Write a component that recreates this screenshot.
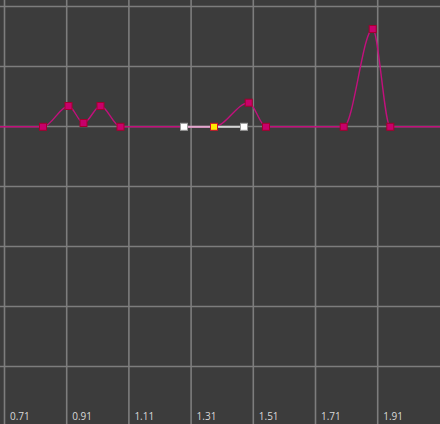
const COLS = [4.5, 66.7, 128.9, 191.1, 253.3, 315.5, 377.7]
const ROWS = [6.5, 66.5, 126.5, 186.5, 246.5, 306.5, 366.5]
const LABELS = ['0.71', '0.91', '1.11', '1.31', '1.51', '1.71', '1.91']

const BASE = 126.8

// keyframes along the curve, in screen coordinates
const keys: [number, number][] = [
  [43, BASE],
  [68.5, 106],
  [83.5, 123],
  [100.5, 106],
  [120.5, BASE],
  [214, BASE],
  [248.7, 102.7],
  [266, BASE],
  [343.7, BASE],
  [372.7, 29],
  [390.3, BASE],
]

function curvePath() {
  let d = `M0 ${BASE} L${keys[0][0]} ${keys[0][1]}`
  for (let i = 1; i < keys.length; i++) {
    const [x0, y0] = keys[i - 1]
    const [x1, y1] = keys[i]
    const dx = (x1 - x0) / 3
    d += ` C${x0 + dx} ${y0} ${x1 - dx} ${y1} ${x1} ${y1}`
  }
  d += ` L440 ${BASE}`
  return d
}

function Key({ x, y, fill = '#c8006b', stroke = '#a3002e' }: { x: number; y: number; fill?: string; stroke?: string }) {
  return <rect x={x - 3.5} y={y - 3.5} width={7} height={7} fill={fill} stroke={stroke} strokeWidth={1} />
}

export default function App() {
  return (
    <div className="relative h-[424px] w-[440px] overflow-hidden bg-[#3c3c3c]">
      <svg width="440" height="424" className="block">
        {COLS.map((x) => (
          <line key={`c${x}`} x1={x} y1={0} x2={x} y2={424} stroke="#7d7d7d" strokeWidth={1.6} />
        ))}
        {ROWS.map((y) => (
          <line key={`r${y}`} x1={0} y1={y} x2={440} y2={y} stroke="#7d7d7d" strokeWidth={1.6} />
        ))}

        <path d={curvePath()} fill="none" stroke="#c2107c" strokeWidth={1.4} />

        {/* tangent handles of the selected key */}
        <line x1={184} y1={BASE} x2={214} y2={BASE} stroke="#e2a9cd" strokeWidth={2} />
        <line x1={214} y1={BASE} x2={244} y2={BASE} stroke="#d4d4d4" strokeWidth={2} />

        {keys.map(([x, y], i) =>
          i === 5 ? null : <Key key={i} x={x} y={y} />,
        )}
        <rect x={180.5} y={BASE - 3.5} width={7} height={7} fill="#ffffff" stroke="#9a9a9a" strokeWidth={1} />
        <rect x={240.5} y={BASE - 3.5} width={7} height={7} fill="#ffffff" stroke="#9a9a9a" strokeWidth={1} />
        <Key x={214} y={BASE} fill="#ffea00" stroke="#c8102e" />

        {LABELS.map((t, i) => (
          <text
            key={t}
            x={COLS[i] + 5.5}
            y={420}
            fill="#d8d8d8"
            fontSize={10}
            fontFamily="'Open Sans', 'Noto Sans', sans-serif"
          >
            {t}
          </text>
        ))}
      </svg>
    </div>
  )
}
